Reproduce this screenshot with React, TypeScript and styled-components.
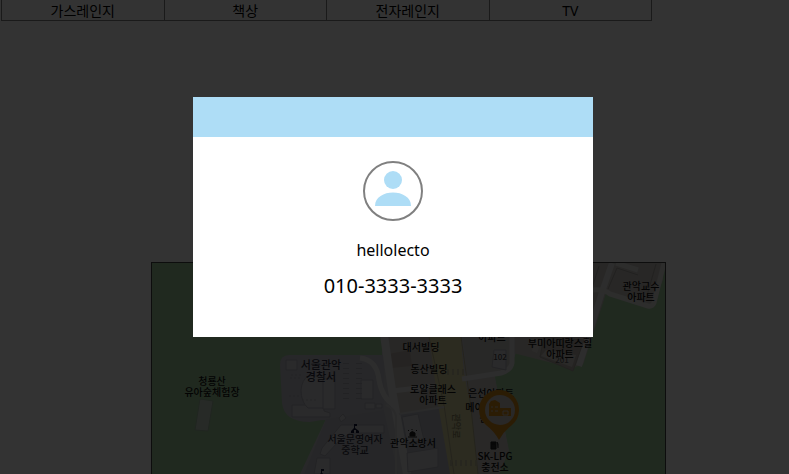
import React from 'react';
import styled, { createGlobalStyle } from 'styled-components';

const GlobalStyle = createGlobalStyle`
  * { box-sizing: border-box; }
  body {
    margin: 0;
    background: #fff;
    color: #000;
    font-family: 'Noto Sans', 'Noto Sans CJK KR', sans-serif;
  }
`;

const Page = styled.main`
  display: flex;
  flex-direction: column;
  height: 100vh;
  overflow: hidden;
`;

const OptionTable = styled.table`
  width: calc(100% - 138px);
  margin-left: 1px;
  border-collapse: collapse;
  table-layout: fixed;
`;

const OptionCell = styled.td`
  height: 20px;
  padding: 2px 0 0;
  border: 1px solid #808080;
  border-top: 0;
  text-align: center;
  font-size: 14px;
  line-height: 18px;
`;

const MapSection = styled.section`
  flex: 1;
  min-height: 0;
  margin: 241px 123px 0 151px;
  border: 1px solid #404040;
  border-bottom: 0;
  background: #a0cb9b;
  overflow: hidden;
`;

const MapDrawing = styled.svg`
  display: block;
  width: 100%;
  height: auto;
`;

const MapLabel = styled.text<{ $size: number; $color: string }>`
  font-family: 'Noto Sans CJK KR', sans-serif;
  font-size: ${({ $size }) => $size}px;
  font-weight: 500;
  text-anchor: middle;
  fill: ${({ $color }) => $color};
`;

const Overlay = styled.div`
  position: fixed;
  inset: 0;
  display: flex;
  align-items: flex-start;
  justify-content: center;
  padding: 97px 3px 0 0;
  background: rgba(0, 0, 0, 0.8);
`;

const Dialog = styled.div`
  width: 400px;
  max-width: 100%;
  background: #fff;
  text-align: center;
`;

const DialogBar = styled.div`
  height: 40px;
  background: #aeddf6;
`;

const DialogBody = styled.div`
  display: flex;
  flex-direction: column;
  align-items: center;
  padding: 24px 16px 35px;
`;

const Avatar = styled.svg`
  width: 60px;
  height: 60px;
  border: 2px solid #808080;
  border-radius: 50%;
`;

const UserName = styled.p`
  margin: 16px 0 0;
  font-size: 16px;
  line-height: 26px;
`;

const Phone = styled.p`
  margin: 7px 0 0;
  font-size: 20px;
  line-height: 32px;
`;

const options = ['가스레인지', '책상', '전자레인지', 'TV'];

interface Place {
  x: number;
  y: number;
  lines: string[];
  size?: number;
  color?: string;
}

const places: Place[] = [
  { x: 641, y: 290, lines: ['관악교수', '아파트'] },
  { x: 421, y: 351, lines: ['대서빌딩'] },
  { x: 429, y: 373, lines: ['동산빌딩'] },
  { x: 433, y: 393, lines: ['로얄클래스', '아파트'] },
  { x: 321, y: 369, lines: ['서울관악', '경찰서'], size: 11, color: '#303040' },
  { x: 212, y: 385, lines: ['청룡산', '유아숲체험장'] },
  { x: 355, y: 443, lines: ['서울문영여자', '중학교'], color: '#303040' },
  { x: 413, y: 447, lines: ['관악소방서'] },
  { x: 492, y: 341, lines: ['아파트'] },
  { x: 500, y: 360, lines: ['102'], size: 8, color: '#484848' },
  { x: 562, y: 363, lines: ['201'], size: 8, color: '#606060' },
  { x: 560, y: 347, lines: ['부미아띠랑스힐', '아파트'] },
  { x: 491, y: 397, lines: ['은선아파트'] },
  { x: 479, y: 411, lines: ['메이플'] },
  { x: 484, y: 422, lines: ['원'] },
  { x: 495, y: 460, lines: ['SK-LPG', '충전소'] },
];

function SchoolIcon({ x, y }: { x: number; y: number }) {
  return (
    <g transform={`translate(${x} ${y})`} fill="#101838">
      <path d="M-1-5H2V-3H0V-1L4 2V4H1V1H-1V4H-4V2L-1-1Z" />
    </g>
  );
}

function NeighbourhoodMap() {
  return (
    <MapDrawing viewBox="152 263 513 211" role="img" aria-label="지도">
      <path d="M381 335H520L512 368L495 376L509 450L499 474H300L326 419L340 357H382Z" fill="#c8c8ce" />
      <path d="M152 263H384L382 356L330 355L322 422L300 474H152Z" fill="#a0cb9b" />
      <path d="M289 355H384V423L350 423Q334 417 310 422Q284 422 282 403L280 365Q280 355 289 355Z" fill="#c2c2ca" />
      <path d="M326 419L384 410L398 474H304Z" fill="#bebfc7" />
      <path d="M384 335H435L455 474H406Z" fill="#c7c3bc" />
      <path d="M397 414L444 408L451 474H407Z" fill="#b7bac4" />
      <path d="M388 354L410 350L412 366L392 368Z" fill="#bbb1a9" />
      <path d="M463 335H512V368L467 378Z" fill="#c8c6c2" />
      <path d="M467 381L495 376L500 410L509 450L499 474H478Z" fill="#cac8c4" />

      <path d="M592 263H663V280L651 307L606 294L584 364L572 368L513 353V263Z" fill="#c6c2bc" />
      <path d="M606 294L651 308L665 277V474H507L509 450L501 410L495 376L510 370L514 357L574 372L582 368Z" fill="#a0cb9b" />
      <path d="M612 263L602 292L579 366" fill="none" stroke="#e0e0df" strokeWidth="6" />
      <path d="M593 290Q604 289 610 294L648 306Q652 307 654 303L664 263M616 263L638 270" fill="none" stroke="#dededc" strokeWidth="5" />
      <path d="M592 288L599 266M608 289L617 268L638 275M646 299L656 264" fill="none" stroke="#a8a49f" />

      <path d="M544 337L540 357L573 371L584 340Z" fill="#b7b1aa" stroke="#a8a39c" />
      <path d="M546 350L576 355L572 367L541 356Z" fill="#d0ccc5" />
      <path d="M536 339H542L537 353L532 351Z" fill="#d7d3cd" />

      <path d="M429 335H461Q462 372 471 407L478 474H450L438 404Z" fill="#dbd49e" />
      <path d="M429 337L444 405L454 474M461 337L471 408L478 474" fill="none" stroke="#b5b08e" />
      <path d="M442 372H466M450 463H478" stroke="#c2bd9a" strokeWidth="6" strokeDasharray="2 3" />
      <path d="M384 335L392 390L407 474" fill="none" stroke="#dfdfe1" strokeWidth="8" />
      <path d="M360 358Q377 360 379 380Q382 398 394 405M392 391L435 386M462 379L501 373Q511 370 512 363V337" fill="none" stroke="#e0e0e1" strokeWidth="5" />
      <path d="M396 474V416Q394 408 386 405M399 414L444 407" fill="none" stroke="#d0d0d2" strokeWidth="2" />

      <g fill="#d0d0d5" stroke="#adadb6">
        <path d="M286 360H297V370H286Z" />
        <path d="M292 405H324V411L330 413V417H292Z" />
        <path d="M308 376H325V408H308Q301 402 301 390Q302 380 308 376Z" />
        <path d="M323 379H335V409H323Z" />
        <path d="M361 380H373V399H361ZM365 403H375V409H365ZM376 404H382V408H376Z" />
        <path d="M339 418L343 414L346 418L341 422Z" />
        <path d="M322 448L341 425H384V433H350L338 442L325 456L320 454Z" />
        <path d="M317 458H330V474H314Z" />
        <path d="M402 417L418 414L424 440L407 443Z" />
        <path d="M407 453L438 448V467L408 472Z" />
        <path d="M494 350H506V370L492 367Z" />
      </g>
      <path d="M291 375H303M290 378H301M289 396H299M302 400H318" stroke="#b2b2bb" strokeDasharray="2 2" />
      <path d="M346 363V399M359 363V399" stroke="#aaaab6" strokeWidth="6" strokeDasharray="1 4" />
      <path d="M200 399L213 401L208 431L195 430Z" fill="#c4d2c4" stroke="#9fbaa0" />

      {places.map(({ x, y, lines, size = 10, color = '#101010' }) => (
        <MapLabel key={lines.join()} y={y} $size={size} $color={color}>
          {lines.map((line, i) => <tspan key={line} x={x} dy={i ? size + 1 : 0}>{line}</tspan>)}
        </MapLabel>
      ))}
      <g transform="rotate(90 457 426)">
        <MapLabel x={457} y={430} $size={9} $color="#88845f">관악로</MapLabel>
      </g>

      <SchoolIcon x={355} y={429} />
      <SchoolIcon x={322} y={474} />
      <path d="M410 436V433Q412 430 415 433V436ZM408 437H417M412 429V430M408 430L409 431M417 430L416 431" fill="#202020" stroke="#202020" />
      <path d="M491 442H496V449H491ZM497 442L498 444V448M492 444H495" fill="#303030" stroke="#181818" />

      <path d="M499 440Q494 431 486 425A20 20 0 1 1 512 425Q504 431 499 440Z" fill="#d68a18" />
      <circle cx="500" cy="410" r="15" fill="#cdc5c0" />
      <path d="M489 416V404L491 401L495 400L500 403V408H511V416Z" fill="#d68a18" />
      <path d="M491 407H493M495 407H498M491 411H493M495 411H498M503 411H508V415H503Z" fill="none" stroke="#cdc5c0" />
    </MapDrawing>
  );
}

export default function App() {
  return (
    <>
      <GlobalStyle />
      <Page>
        <OptionTable>
          <tbody>
            <tr>{options.map((option) => <OptionCell key={option}>{option}</OptionCell>)}</tr>
          </tbody>
        </OptionTable>
        <MapSection><NeighbourhoodMap /></MapSection>
      </Page>
      <Overlay>
        <Dialog role="dialog" aria-modal="true" aria-label="hellolecto">
          <DialogBar />
          <DialogBody>
            <Avatar viewBox="0 0 56 56" aria-hidden="true">
              <circle cx="28" cy="17" r="9" fill="#aeddf6" />
              <path d="M10 43C10 25 46 25 46 43Z" fill="#aeddf6" />
            </Avatar>
            <UserName>hellolecto</UserName>
            <Phone>010-3333-3333</Phone>
          </DialogBody>
        </Dialog>
      </Overlay>
    </>
  );
}
